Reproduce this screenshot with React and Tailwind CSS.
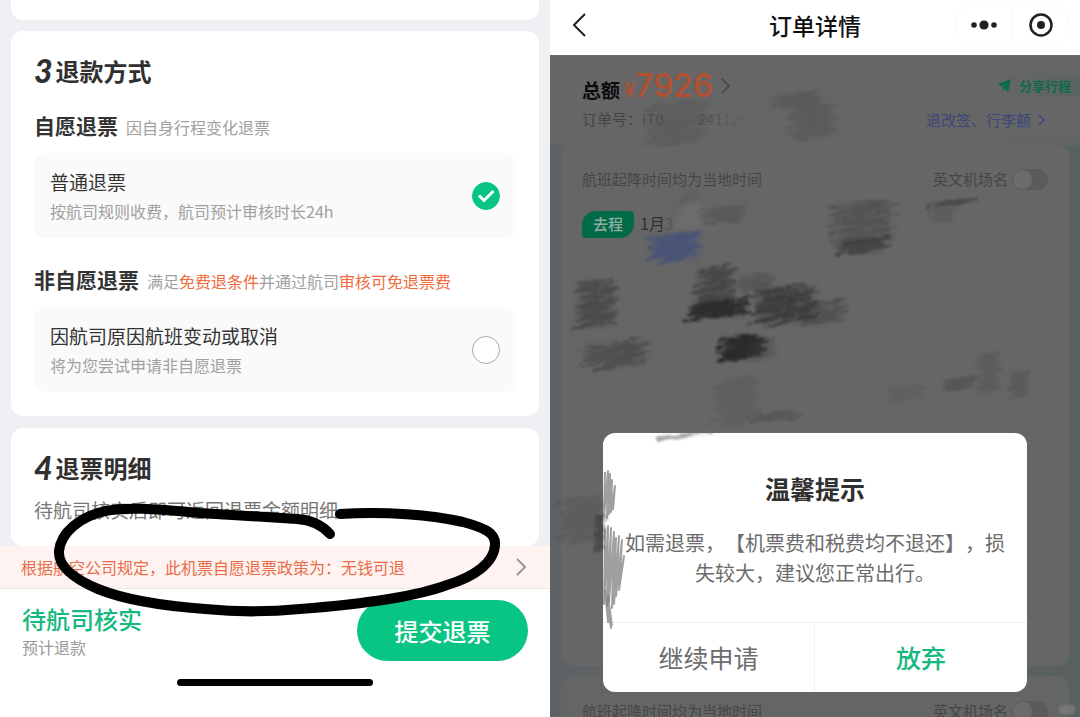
import React, { useState } from 'react';

const REFUND_OPTIONS = [
    {
        id: 'voluntary',
        heading: '自愿退票',
        hint: [{ text: '因自身行程变化退票' }],
        title: '普通退票',
        desc: '按航司规则收费，航司预计审核时长24h',
    },
    {
        id: 'involuntary',
        heading: '非自愿退票',
        hint: [
            { text: '满足' },
            { text: '免费退条件', hot: true },
            { text: '并通过航司' },
            { text: '审核可免退票费', hot: true },
        ],
        title: '因航司原因航班变动或取消',
        desc: '将为您尝试申请非自愿退票',
    },
];

// x, y, width, height, number of strokes, colour, opacity, stroke width
const PENCIL_MARKS = [
    [650, 104, 52, 38, 9, '#4c4c4c', 0.3, 3],
    [776, 94, 44, 12, 4, '#505050', 0.5, 3],
    [792, 108, 40, 28, 7, '#505050', 0.45, 3],
    [702, 208, 40, 14, 4, '#4a4a4a', 0.45, 2],
    [652, 235, 46, 24, 6, '#3d4e7e', 0.7, 3],
    [578, 282, 36, 44, 11, '#363636', 0.55, 2],
    [586, 343, 58, 22, 7, '#383838', 0.5, 2],
    [698, 268, 34, 34, 9, '#303030', 0.6, 2],
    [692, 302, 52, 14, 6, '#1e1e1e', 0.75, 3],
    [738, 276, 34, 12, 4, '#404040', 0.4, 2],
    [756, 288, 58, 34, 9, '#282828', 0.65, 2],
    [800, 302, 44, 20, 5, '#3a3a3a', 0.5, 2],
    [722, 338, 40, 20, 7, '#1c1c1c', 0.8, 3],
    [750, 342, 24, 14, 4, '#404040', 0.4, 2],
    [718, 380, 36, 42, 9, '#545454', 0.4, 4],
    [752, 414, 44, 6, 3, '#484848', 0.5, 2],
    [834, 204, 56, 38, 10, '#404040', 0.5, 2],
    [842, 240, 42, 12, 4, '#333333', 0.6, 3],
    [932, 201, 44, 2, 2, '#383838', 0.6, 2],
    [932, 206, 20, 14, 4, '#505050', 0.4, 2],
    [946, 380, 26, 8, 4, '#474747', 0.5, 3],
    [978, 354, 20, 38, 8, '#505050', 0.4, 3],
    [1012, 372, 14, 24, 6, '#4c4c4c', 0.4, 3],
    [890, 388, 32, 10, 4, '#545454', 0.35, 3],
    [564, 500, 38, 40, 8, '#4c4c4c', 0.3, 4],
    [596, 516, 7, 34, 7, '#2c2c2c', 0.4, 4],
    [662, 434, 46, 2, 3, '#707070', 0.6, 2],
];

// Up and down hatching that spills over the edge of the dialog
const EDGE_MARKS = [
    'M605 472 L604 516 L608 471 L607 518 L610 474 L609 514 L612 480 L611 512 L615 486 L613 510',
    'M605 530 L604 604 L608 526 L607 606 L611 528 L609 602 L614 532 L612 608 L616 538 L614 604 L619 536 L616 596 L622 540 L619 590 L624 556 L620 580',
    'M605 590 L608 622 L606 598 L611 628 L608 596 L612 626',
];

function hatch(x, y, w, h, count) {
    const points = [];
    for (let i = 0; i <= count; i += 1) {
        const cy = y + (h * i) / count;
        const left = Math.sin(i * 2.7 + x) * w * 0.13;
        const right = Math.sin(i * 4.3 + y) * w * 0.13;
        points.push(`${Math.round(x + left)} ${Math.round(cy + w * 0.08)}`);
        points.push(`${Math.round(x + w + right)} ${Math.round(cy - w * 0.08)}`);
    }
    return `M${points.join(' L')}`;
}

function Chevron({ className }) {
    return (
        <svg viewBox="0 0 10 18" fill="none" stroke="currentColor" strokeWidth="2" className={className} aria-hidden="true">
            <path d="M1 1 L9 9 L1 17" />
        </svg>
    );
}

function StepTitle({ number, children }) {
    return (
        <h2 className="flex items-center gap-[3px] text-2xl leading-8 font-bold text-[#303030]">
            <span className="font-['Lato'] text-[32px] font-black italic">{number}</span>
            {children}
        </h2>
    );
}

function RefundOption({ option, checked, onSelect }) {
    return (
        <div>
            <h3 className="flex items-baseline gap-2 text-[21px] leading-8 font-bold text-[#333]">
                {option.heading}
                <span className="text-base font-normal text-[#a0a0a0]">
                    {option.hint.map((part) => (
                        <span key={part.text} className={part.hot ? 'text-[#ee6c3e]' : ''}>{part.text}</span>
                    ))}
                </span>
            </h3>
            <label className="mt-3 flex h-[85px] items-center justify-between rounded-xl bg-[#fafafa] px-4">
                <span className="pt-[2px]">
                    <span className="block text-[19px] leading-7 text-[#333]">{option.title}</span>
                    <span className="block text-base leading-[30px] text-[#a0a0a0]">{option.desc}</span>
                </span>
                <span className="grid shrink-0">
                    <input
                        type="radio"
                        name="refund"
                        checked={checked}
                        onChange={onSelect}
                        className="col-start-1 row-start-1 size-7 appearance-none rounded-full border border-[#aaa] bg-white checked:border-[#09c584] checked:bg-[#09c584]"
                    />
                    {checked && (
                        <svg viewBox="0 0 28 28" className="pointer-events-none col-start-1 row-start-1 size-7" fill="none" stroke="#fff" strokeWidth="3" aria-hidden="true">
                            <path d="M7 13.500 L12 18.500 L21.500 9" />
                        </svg>
                    )}
                </span>
            </label>
        </div>
    );
}

function RefundScreen() {
    const [selected, setSelected] = useState('voluntary');

    return (
        <section className="relative flex flex-col overflow-hidden bg-[#f0f0f4]">
            <div className="flex-1 px-[11px]">
                <div className="h-5 rounded-b-xl bg-white" />

                <div className="mt-[11px] rounded-xl bg-white px-[23px] pt-6 pb-6">
                    <StepTitle number="3">退款方式</StepTitle>
                    <div className="mt-[22px] flex flex-col gap-[25px]">
                        {REFUND_OPTIONS.map((option) => (
                            <RefundOption
                                key={option.id}
                                option={option}
                                checked={selected === option.id}
                                onSelect={() => setSelected(option.id)}
                            />
                        ))}
                    </div>
                </div>

                <div className="mt-3 h-[118px] rounded-xl bg-white px-[23px] pt-6">
                    <StepTitle number="4">退票明细</StepTitle>
                    <p className="mt-3 text-[19px] leading-7 text-[#777]">待航司核实后即可返回退票金额明细</p>
                </div>
            </div>

            <button type="button" className="flex h-[43px] shrink-0 items-center justify-between border-b border-[#eee4e2] bg-[#fef3f1] pr-6 pl-[21px] text-base text-[#ea6d4a]">
                根据航空公司规定，此机票自愿退票政策为：无钱可退
                <Chevron className="h-[18px] w-[10px] text-[#999]" />
            </button>

            <footer className="h-32 shrink-0 bg-white">
                <div className="flex items-start justify-between pt-[11px] pr-[22px] pl-[22px]">
                    <div>
                        <div className="pt-[3px] text-2xl leading-8 font-medium text-[#15b97e]">待航司核实</div>
                        <div className="text-base leading-6 text-[#999]">预计退款</div>
                    </div>
                    <button type="button" className="h-[61px] w-[171px] rounded-full bg-[#09c584] text-2xl font-medium text-white">
                        提交退票
                    </button>
                </div>
                <div className="mx-auto mt-[18px] h-[7px] w-[196px] rounded-full bg-black" />
            </footer>

            {/* Marker loop around the policy line */}
            <svg viewBox="0 0 550 717" className="pointer-events-none absolute top-0 left-0 w-full" fill="none" stroke="#000" strokeWidth="10" strokeLinecap="round" strokeLinejoin="round" aria-hidden="true">
                <path d="M340 514 C385 511 432 515 463 522 C485 528 496 533 495 545 C494 563 474 577 447 585 C415 597 365 604 300 609 C270 612 235 612 205 609 C165 606 125 600 98 589 C72 578 58 565 59 551 C61 532 80 517 105 511 C130 506 165 510 200 513 L297 519 C312 520 322 525 330 534" />
            </svg>
        </section>
    );
}

function FlightNote() {
    return (
        <div className="flex items-center justify-between text-[15px] leading-6 text-[#464646]">
            <span>航班起降时间均为当地时间</span>
            <label className="flex items-center gap-1">
                英文机场名
                <span className="grid items-center">
                    <input type="checkbox" role="switch" className="peer col-start-1 row-start-1 h-[21px] w-9 appearance-none rounded-full bg-[#5b5b5b]" />
                    <span className="pointer-events-none col-start-1 row-start-1 size-[21px] rounded-full border border-[#5e5e5e] bg-[#6b6b6b] peer-checked:justify-self-end" />
                </span>
            </label>
        </div>
    );
}

function ConfirmDialog() {
    return (
        <div role="dialog" aria-labelledby="tip-title" className="absolute top-[378px] left-1/2 w-4/5 -translate-x-1/2 overflow-hidden rounded-xl bg-white text-center">
            <h2 id="tip-title" className="pt-[35px] text-[25px] leading-10 font-bold text-[#303030]">温馨提示</h2>
            <p className="mx-auto mt-5 w-[380px] max-w-full pb-[34px] text-xl leading-[30px] text-[#6c6c6c] [text-spacing-trim:space-all]">
                如需退票，【机票费和税费均不退还】，损失较大，建议您正常出行。
            </p>
            <div className="grid h-[70px] grid-cols-2 border-t border-[#f0f0f0] text-[25px]">
                <button type="button" className="border-r border-[#f0f0f0] text-[#6c6c6c]">继续申请</button>
                <button type="button" className="font-medium text-[#15b97e]">放弃</button>
            </div>
        </div>
    );
}

function PencilMarks() {
    return (
        <svg viewBox="550 55 530 662" className="pointer-events-none absolute top-0 left-0 w-full" fill="none" strokeLinejoin="round" aria-hidden="true">
            <defs>
                <filter id="rough" x="-20%" y="-50%" width="140%" height="200%">
                    <feTurbulence type="fractalNoise" baseFrequency="0.06 0.25" numOctaves="3" seed="4" result="noise" />
                    <feDisplacementMap in="SourceGraphic" in2="noise" scale="10" xChannelSelector="R" yChannelSelector="G" result="bent" />
                    <feGaussianBlur in="bent" stdDeviation="1" />
                </filter>
                <filter id="soft" x="-30%" y="-30%" width="160%" height="160%">
                    <feGaussianBlur stdDeviation="3" />
                </filter>
                <filter id="grain" x="-10%" y="-10%" width="120%" height="120%">
                    <feGaussianBlur stdDeviation="0.6" />
                </filter>
            </defs>
            <path d="M688 188 L720 226 L672 232 Z" fill="#707070" opacity="0.7" filter="url(#soft)" />
            <path d="M690 188 L700 200 L676 206 Z" fill="#4a4a4a" opacity="0.4" filter="url(#soft)" />
            {PENCIL_MARKS.map(([x, y, w, h, count, color, opacity, width]) => (
                <g key={`${x}-${y}`} opacity={opacity}>
                    <rect x={x} y={y} width={w} height={h} fill={color} opacity="0.4" filter="url(#soft)" />
                    <path d={hatch(x, y, w, h, count)} stroke={color} strokeWidth={width} filter="url(#rough)" />
                </g>
            ))}
            {EDGE_MARKS.map((d) => (
                <path key={d} d={d} stroke="#808080" strokeWidth="2" opacity="0.75" filter="url(#grain)" />
            ))}
        </svg>
    );
}

function OrderScreen() {
    return (
        <section className="flex flex-col overflow-hidden">
            <header className="grid h-[55px] shrink-0 grid-cols-3 items-center bg-white px-[10px] pb-[5px]">
                <button type="button" aria-label="返回" className="ml-[13px] w-fit">
                    <svg viewBox="0 0 13 24" className="h-6 w-[13px]" fill="none" stroke="#222" strokeWidth="2" aria-hidden="true">
                        <path d="M12 1 L1 12 L12 23" />
                    </svg>
                </button>
                <h1 className="text-center text-[23px] leading-8 font-medium whitespace-nowrap text-[#111]">订单详情</h1>
                <div className="flex h-11 items-center justify-self-end rounded-full border border-[#fafafa]">
                    <button type="button" aria-label="更多" className="px-[14px]">
                        <svg viewBox="0 0 28 12" className="h-3 w-7" fill="#222" aria-hidden="true">
                            <circle cx="4" cy="6" r="2.800" />
                            <circle cx="14" cy="6" r="4.600" />
                            <circle cx="24" cy="6" r="2.800" />
                        </svg>
                    </button>
                    <span className="h-7 w-px bg-[#f6f6f6]" />
                    <button type="button" aria-label="关闭" className="px-4">
                        <svg viewBox="0 0 24 24" className="size-6" fill="none" stroke="#222" strokeWidth="2.500" aria-hidden="true">
                            <circle cx="12" cy="12" r="10.500" />
                            <circle cx="12" cy="12" r="4" fill="#222" stroke="none" />
                        </svg>
                    </button>
                </div>
            </header>

            <div className="relative flex-1 overflow-hidden bg-linear-to-r from-[#5d6265] via-[#646565] to-[#586160]">
                <div className="flex h-[90px] justify-between bg-linear-to-b from-[#666] from-80% to-[#666]/70 pt-[11px] pl-8">
                    <div>
                        <div className="flex h-10 items-center">
                            <span className="pt-2 text-[19px] leading-8 font-bold text-[#0c0c0c]">总额</span>
                            <span className="ml-1 pt-2 font-['Inter'] text-xl leading-8 font-medium text-[#b4502f]">¥</span>
                            <strong className="font-['Inter'] text-[32px] leading-10 font-medium text-[#b4502f]">7926</strong>
                            <Chevron className="ml-2 h-4 w-[9px] text-[#4a4a4a]" />
                        </div>
                        <div className="mt-px flex text-[15px] leading-6 text-[#454545]">
                            订单号：
                            <span className="w-14 opacity-70">IT0</span>
                            <span className="bg-linear-to-r from-[#4f4f4f] to-[#626262] bg-clip-text text-transparent">241129</span>
                        </div>
                    </div>
                    <div className="flex flex-col items-end">
                        <button type="button" className="mt-2 flex h-[23px] items-center gap-2 rounded-l-full bg-linear-to-r from-[#666] to-[#5c6562] pr-[9px] pl-3 text-[13px] font-bold text-[#0b6a48]">
                            <svg viewBox="0 0 13 13" className="size-[13px]" fill="currentColor" aria-hidden="true">
                                <path d="M0 5 L13 0 L10 13 L6.500 9.500 L5 12 L4.500 8 L9 4 L3.500 7.500 Z" />
                            </svg>
                            分享行程
                        </button>
                        <a href="#rules" className="mt-[11px] mr-[35px] flex items-center gap-[7px] text-[15px] leading-6 text-[#3b477b]">
                            退改签、行李额
                            <Chevron className="h-3 w-[7px]" />
                        </a>
                    </div>
                </div>

                <div className="mx-[11px] h-[521px] rounded-xl bg-[#666] px-[21px] pt-[22px]">
                    <FlightNote />
                    <div className="mt-5 flex items-center gap-[6px]">
                        <span className="flex h-[27px] w-[52px] items-center justify-center rounded-tl-[14px] rounded-tr rounded-br-[14px] rounded-bl bg-[#016b47] text-[15px] font-medium text-[#93aca3]">
                            去程
                        </span>
                        <span className="pb-[3px] text-base leading-6 text-[#303030]">
                            1月<span className="text-[#555]">3</span>
                        </span>
                    </div>
                </div>
                <div className="mx-[11px] mt-[10px] h-24 rounded-xl bg-[#646565] px-[21px] pt-[23px]">
                    <FlightNote />
                </div>

                <ConfirmDialog />
                <PencilMarks />
                <span className="absolute right-1 bottom-[2px] h-[11px] w-[18px] rounded-full border-2 border-[#777] bg-[#858585] opacity-60" />
            </div>
        </section>
    );
}

export default function App() {
    return (
        <main className="grid h-screen grid-cols-[55fr_53fr] overflow-hidden font-['Noto_Sans_CJK_SC',sans-serif]">
            <RefundScreen />
            <OrderScreen />
        </main>
    );
}
